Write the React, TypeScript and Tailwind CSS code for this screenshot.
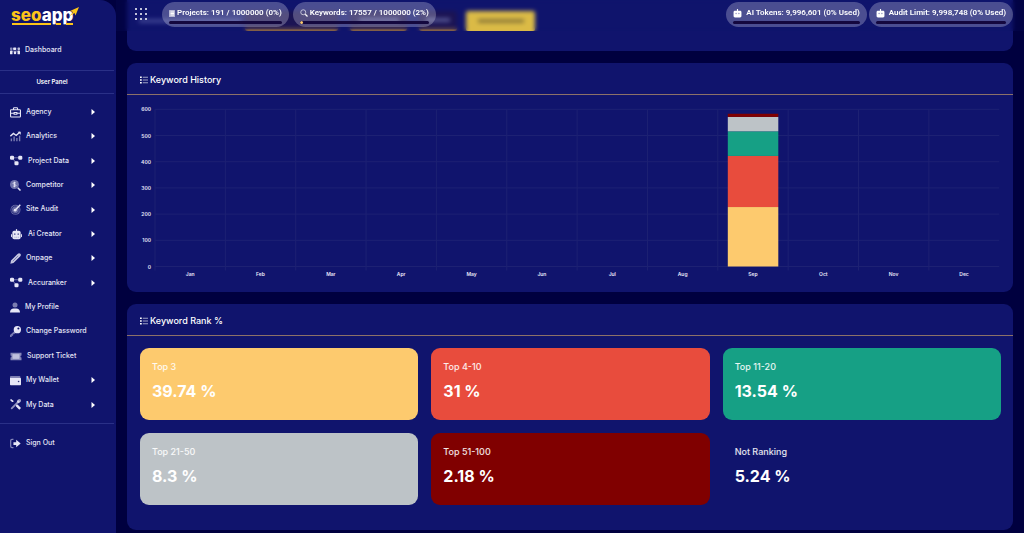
import type { ReactNode } from 'react';

interface IconProps {
  className?: string;
  children: ReactNode;
}

function Icon({ className = 'w-[11px]', children }: IconProps) {
  return (
    <svg className={`h-[11px] shrink-0 ${className}`} viewBox="0 0 16 16" fill="currentColor" aria-hidden="true">
      {children}
    </svg>
  );
}

const nodesIcon = (
  <svg className="h-[11px] w-[13px] shrink-0" viewBox="0 0 19 16" fill="currentColor" aria-hidden="true">
    <path d="M3 4h13M4 5l5 7" stroke="currentColor" strokeWidth="1.2" opacity=".55" />
    <rect x="0" y="1" width="6" height="6" rx="2" />
    <rect x="12" y="1" width="6" height="6" rx="2" />
    <rect x="6.5" y="9" width="6" height="6" rx="2" />
  </svg>
);

const dashboardIcon = (
  <Icon className="w-[10px]">
    <rect x="0" y="3" width="4" height="4" rx="1" opacity=".55" />
    <rect x="5" y="3" width="5" height="4" rx="1" />
    <rect x="12" y="3" width="4" height="4" rx="1" opacity=".8" />
    <rect x="0" y="8" width="4" height="6" rx="1" />
    <rect x="6" y="9" width="4" height="5" rx="2" />
    <rect x="12" y="8" width="4" height="6" rx="1" />
    <rect x="4" y="8" width="8" height="2" opacity=".4" />
  </Icon>
);

const briefcaseIcon = (
  <Icon>
    <path
      d="M5 4V2.2C5 1.5 5.5 1 6.200 1h3.600C10.500 1 11 1.500 11 2.200V4M1.800 4h12.400c.6 0 1 .4 1 1v8.600c0 .6-.4 1-1 1H1.800c-.6 0-1-.4-1-1V5c0-.6.4-1 1-1zM1 9h5m4 0h5M6 8v2.500h4V8z"
      fill="none"
      stroke="currentColor"
      strokeWidth="1.600"
    />
  </Icon>
);

const analyticsIcon = (
  <Icon>
    <path d="M0.500 7.500 5 3.500l4 3L14.500 1.500" fill="none" stroke="currentColor" strokeWidth="2" />
    <path d="M11 1h4.500v4.500z" />
    <path d="M1 11h2v4H1zM5 8h2v7H5zM9 10h2v5H9zM13 7h2v8h-2z" opacity=".5" />
  </Icon>
);

const competitorIcon = (
  <Icon>
    <circle cx="6.500" cy="6.500" r="6.500" opacity=".45" />
    <path d="m10.500 12 1.500-1.500 4 4-1.500 1.500z" />
    <path
      d="M8.500 4.500c-.5-.6-1.200-.8-2-.8-1.100 0-1.900.5-1.900 1.300 0 2 4 .8 4 2.900 0 .9-.9 1.400-2 1.400-.9 0-1.600-.3-2.100-.9M6.500 2.500v8"
      fill="none"
      stroke="currentColor"
      strokeWidth="1.300"
    />
  </Icon>
);

const auditIcon = (
  <Icon>
    <circle cx="8" cy="8.500" r="7.300" opacity=".4" />
    <path d="M12.500 5.500A5.600 5.600 0 1 1 9.500 3.200" fill="none" stroke="#10146d" strokeWidth="1" />
    <path d="M7 9.500 15 1" stroke="currentColor" strokeWidth="2" />
    <circle cx="7.500" cy="9" r="2" />
  </Icon>
);

const robotIcon = (
  <Icon>
    <rect x="7.200" y="0" width="1.600" height="4" rx=".8" />
    <rect x="2" y="2.500" width="12" height="12.500" rx="2.500" />
    <rect x="0" y="7" width="1.400" height="5" rx=".7" />
    <rect x="14.600" y="7" width="1.400" height="5" rx=".7" />
    <circle cx="5.500" cy="7.500" r="1.200" fill="#5a5e9c" />
    <circle cx="10.500" cy="7.500" r="1.200" fill="#5a5e9c" />
    <path d="M5 12h1.500m1 0h1.500m1 0h1.500" stroke="#8a8dbb" />
  </Icon>
);

const pencilIcon = (
  <Icon>
    <path d="M.5 15.500 1.500 11 11 1.500C12.500 0 14 .2 15 1.200s1.200 2.300-.3 3.800L5 14.500z" opacity=".85" />
    <path d="m4 12 8-8" stroke="#5a5e9c" />
  </Icon>
);

const userIcon = (
  <Icon className="w-[10px]">
    <circle cx="8" cy="4" r="4" opacity=".5" />
    <path d="M0 16c0-4 2.500-6.500 6-6.500h4c3.500 0 6 2.500 6 6.500z" />
  </Icon>
);

const keyIcon = (
  <Icon>
    <path d="m7 7 2 2-3 3H4.500v2H2.500v2H0v-3z" opacity=".5" />
    <path d="M10.700 0a5.300 5.300 0 1 1 0 10.600 5.300 5.300 0 0 1 0-10.600zm1.500 2.200a1.500 1.500 0 1 0 0 3 1.500 1.500 0 0 0 0-3z" />
  </Icon>
);

const ticketIcon = (
  <Icon className="w-[12px]">
    <path d="M0 2.500h16v4a1.500 1.500 0 0 0 0 3v4H0v-4a1.500 1.500 0 0 0 0-3z" opacity=".55" />
    <rect x="3.500" y="5" width="9" height="6" opacity=".6" stroke="currentColor" />
  </Icon>
);

const walletIcon = (
  <Icon>
    <path d="M1.500 1.500h12.500c.6 0 1 .4 1 1V4H0V3c0-.8.700-1.500 1.500-1.500z" opacity=".5" />
    <path d="M0 4h14.500c.8 0 1.500.7 1.500 1.500v8c0 .8-.7 1.500-1.500 1.500h-13C.7 15 0 14.300 0 13.500z" />
    <circle cx="12.500" cy="9.500" r="1.200" fill="#34387f" />
  </Icon>
);

const toolsIcon = (
  <Icon>
    <path d="m14.500 1.500-12 12" stroke="currentColor" strokeWidth="2.600" strokeLinecap="round" opacity=".6" />
    <path d="M10 4.500c0-2.500 2-4.500 4.500-4l-2 2 1 1 2-2c.8 2.500-1 4.700-3.500 4.500z" opacity=".8" />
    <path d="M0 1.500 1.500 0 5 2.500v2l4 4 2-.5 5 5-2.500 2.500-5-5 .5-2-4-4H3z" />
  </Icon>
);

const signOutIcon = (
  <Icon>
    <path d="M5 2H3C1.800 2 1 2.800 1 4v8c0 1.200.8 2 2 2h2" fill="none" stroke="currentColor" strokeWidth="1.800" opacity=".55" />
    <path d="M5 6h4V2.500l6.500 5.500L9 13.500V10H5z" />
  </Icon>
);

const listIcon = (
  <svg className="h-2 w-2 shrink-0" viewBox="0 0 16 16" fill="currentColor" aria-hidden="true">
    <path d="M0 1h3.500v3H0zM0 6.500h3.500v3H0zM0 12h3.500v3H0z" />
    <path d="M5.500 1.500H16v2H5.500zM5.500 7H16v2H5.500zM5.500 12.500H16v2H5.500z" opacity=".6" />
  </svg>
);

const menuItems = [
  { label: 'Agency', icon: briefcaseIcon, expandable: true },
  { label: 'Analytics', icon: analyticsIcon, expandable: true },
  { label: 'Project Data', icon: nodesIcon, expandable: true },
  { label: 'Competitor', icon: competitorIcon, expandable: true },
  { label: 'Site Audit', icon: auditIcon, expandable: true },
  { label: 'Ai Creator', icon: <span className="flex pl-px pr-px">{robotIcon}</span>, expandable: true },
  { label: 'Onpage', icon: pencilIcon, expandable: true },
  { label: 'Accuranker', icon: nodesIcon, expandable: true },
  { label: 'My Profile', icon: userIcon, expandable: false },
  { label: 'Change Password', icon: keyIcon, expandable: false },
  { label: 'Support Ticket', icon: ticketIcon, expandable: false },
  { label: 'My Wallet', icon: walletIcon, expandable: true },
  { label: 'My Data', icon: toolsIcon, expandable: true },
];

const months = ['Jan', 'Feb', 'Mar', 'Apr', 'May', 'Jun', 'Jul', 'Aug', 'Sep', 'Oct', 'Nov', 'Dec'];

const segments = [
  { from: 0, to: 227, color: '#fdca6e' },
  { from: 227, to: 422, color: '#e84c3d' },
  { from: 422, to: 516, color: '#16a085' },
  { from: 516, to: 571, color: '#bdc3c7' },
  { from: 571, to: 583, color: '#800000' },
];

const ranks = [
  { label: 'Top 3', value: '39.74 %', color: 'bg-[#fdca6e]' },
  { label: 'Top 4-10', value: '31 %', color: 'bg-[#e84c3d]' },
  { label: 'Top 11-20', value: '13.54 %', color: 'bg-[#16a085]' },
  { label: 'Top 21-50', value: '8.3 %', color: 'bg-[#bdc3c7]' },
  { label: 'Top 51-100', value: '2.18 %', color: 'bg-[#800000]' },
  { label: 'Not Ranking', value: '5.24 %', color: '' },
];

function Logo() {
  return (
    <svg className="h-7 w-[72px]" viewBox="0 0 72 28" role="img" aria-label="seoapp">
      <text x="1" y="19" fontSize="17" fontWeight="800" fontFamily="Inter, sans-serif" fill="#fff">
        <tspan fill="#fcc419">seo</tspan>app
      </text>
      <path d="M2 22h39M46 22h5M56 22h7" stroke="#fcc419" strokeWidth="2" />
      <path d="M69 5 60 9l3 1-4 4.500 5.500-3.500 1 2.500z" fill="#fcc419" />
    </svg>
  );
}

interface MenuLinkProps {
  label: string;
  icon: ReactNode;
  expandable?: boolean;
}

function MenuLink({ label, icon, expandable = false }: MenuLinkProps) {
  return (
    <a href="#" className="flex h-6 items-center gap-[5px] pr-5 pl-[10px] text-[7px] font-medium whitespace-nowrap">
      {icon}
      <span className="flex-1">{label}</span>
      {expandable && (
        <svg className="h-[6px] w-[5px] shrink-0 fill-white" viewBox="0 0 5 6" aria-hidden="true">
          <path d="M0.500 0 4 3 .5 6z" />
        </svg>
      )}
    </a>
  );
}

function Sidebar() {
  return (
    <aside className="flex w-[116px] shrink-0 flex-col rounded-tr-[16px] bg-[#10146d] text-[#e6e6f6]">
      <div className="pt-[2px] pl-[10px]">
        <Logo />
      </div>
      <nav>
        <div className="py-2">
          <MenuLink label="Dashboard" icon={dashboardIcon} />
        </div>
        <p className="mr-[2px] flex h-6 items-center justify-center border-y border-[#2a3087] pr-[10px] pb-px text-[6px] font-semibold text-white">
          User Panel
        </p>
        <div className="mt-[6px] flex h-[317px] flex-col justify-between">
          {menuItems.map((item) => (
            <MenuLink key={item.label} label={item.label} icon={item.icon} expandable={item.expandable} />
          ))}
        </div>
        <div className="mt-[6px] mr-[2px] border-t border-[#2a3087] pt-[7px]">
          <MenuLink label="Sign Out" icon={signOutIcon} />
        </div>
      </nav>
    </aside>
  );
}

interface UsagePillProps {
  icon: ReactNode;
  text: string;
  used?: boolean;
}

function UsagePill({ icon, text, used = false }: UsagePillProps) {
  return (
    <div className="h-[25px] rounded-full bg-white/25 px-[7px] pt-[5px]">
      <div className="flex h-3 items-center gap-[2px] font-[Roboto,sans-serif] text-[8px] font-semibold whitespace-nowrap text-white">
        {icon}
        {text}
      </div>
      <div className="mt-[2px] h-[3px] overflow-hidden rounded-full bg-[#14083f]">
        {used && <div className="h-full w-[3px] rounded-full bg-[#fdca6e]" />}
      </div>
    </div>
  );
}

const pillRobot = (
  <svg className="mr-[2px] h-[9px] w-[9px] shrink-0" viewBox="0 0 16 16" fill="currentColor" aria-hidden="true">
    <path d="M7 0h2v3h3.500C14 3 15 4 15 5.500v7c0 1.500-1 2.500-2.500 2.500h-9C2 15 1 14 1 12.500v-7C1 4 2 3 3.500 3H7z" />
    <circle cx="5.500" cy="8" r="1.200" fill="#8a8dbb" />
    <circle cx="10.500" cy="8" r="1.200" fill="#8a8dbb" />
  </svg>
);

function Topbar() {
  return (
    <header className="sticky top-0 z-10 -mb-[31px] flex h-[31px] items-start gap-1 bg-[#10146d]/15 pt-[2px] pr-[11px] pl-[19px] backdrop-blur-[2px]">
      <button type="button" aria-label="Apps" className="mt-[6px] mr-[11px] text-white">
        <svg className="h-3 w-3" viewBox="0 0 12 12" fill="currentColor" aria-hidden="true">
          <circle cx="1" cy="1" r="1" />
          <circle cx="6" cy="1" r="1" />
          <circle cx="11" cy="1" r="1" />
          <circle cx="1" cy="6" r="1" />
          <circle cx="6" cy="6" r="1" />
          <circle cx="11" cy="6" r="1" />
          <circle cx="1" cy="11" r="1" />
          <circle cx="6" cy="11" r="1" />
          <circle cx="11" cy="11" r="1" />
        </svg>
      </button>
      <UsagePill
        icon={
          <svg className="h-[7px] w-[6px] shrink-0" viewBox="0 0 12 14" fill="currentColor" aria-hidden="true">
            <rect width="12" height="14" rx="1" opacity=".6" />
            <path d="M3 3h7v2H3zM3 6h7v2H3zM3 9h7v2H3z" />
          </svg>
        }
        text="Projects: 191 / 1000000 (0%)"
      />
      <UsagePill
        used
        icon={
          <svg className="h-2 w-2 shrink-0" viewBox="0 0 16 16" fill="none" stroke="currentColor" aria-hidden="true">
            <circle cx="6.500" cy="6.500" r="5" strokeWidth="1.800" opacity=".7" />
            <path d="m10.500 10.500 4.500 4.500" strokeWidth="2.500" />
          </svg>
        }
        text="Keywords: 17557 / 1000000 (2%)"
      />
      <div className="ml-auto flex gap-[2px]">
        <UsagePill icon={pillRobot} text="AI Tokens: 9,996,601 (0% Used)" />
        <UsagePill icon={pillRobot} text="Audit Limit: 9,998,748 (0% Used)" />
      </div>
    </header>
  );
}

// Scrolled under the topbar, so only its blurred lower part shows
function FilterCard() {
  const filters = [
    { label: 'Date range', width: 'w-[93px]', bar: 'w-0' },
    { label: 'Project', width: 'ml-3 w-[57px]', bar: 'w-10' },
    { label: 'Ranking', width: 'ml-3 w-[38px]', bar: 'w-6' },
  ];
  return (
    <section className="h-[51px] rounded-b-[9px] bg-[#10146d] pt-[11px] pl-3">
      <div className="flex h-5 items-center">
        <span className="mr-1 h-1 w-[102px] bg-[#454a98]" />
        {filters.map((filter) => (
          <button
            key={filter.label}
            type="button"
            aria-label={filter.label}
            className={`flex h-5 items-center justify-center rounded-[3px] border-b-2 border-[#c08a3a] bg-[#1e1450] ${filter.width}`}
          >
            <span className={`h-1 bg-[#5f5f98] ${filter.bar}`} />
          </button>
        ))}
        <button type="button" aria-label="Add keywords" className="ml-[9px] flex h-5 w-[69px] items-center justify-center rounded-[2px] bg-[#ffd840]">
          <span className="h-1 w-[46px] bg-[#a89030]" />
        </button>
      </div>
    </section>
  );
}

function Panel({ title, children }: { title: string; children: ReactNode }) {
  return (
    <section className="overflow-hidden rounded-[9px] bg-[#10146d]">
      <h2 className="flex h-8 items-center gap-[2px] border-b border-[#8c7168] pt-[2px] pl-[13px] text-[9px] font-medium text-white">
        {listIcon}
        {title}
      </h2>
      {children}
    </section>
  );
}

function KeywordChart() {
  const left = 15;
  const step = 70.35;
  const base = 163.5;
  const unit = 0.262;
  return (
    <svg className="block w-full" viewBox="0 0 861 180" fontFamily="Inter, sans-serif" fontSize="5" fontWeight="600" role="img" aria-label="Keyword history by month">
      {[0, 100, 200, 300, 400, 500, 600].map((tick) => (
        <g key={tick}>
          <path d={`M${left} ${base - tick * unit}h${step * 12}`} stroke="#1d2173" />
          <text x="11" y={base - tick * unit + 2} textAnchor="end" fill="#e8e8f8">
            {tick}
          </text>
        </g>
      ))}
      {months.map((month, i) => (
        <g key={month}>
          <path d={`M${left + i * step} ${base - 600 * unit}V${base + 4}`} stroke="#1d2173" />
          <text x={left + (i + 0.5) * step} y={base + 9} textAnchor="middle" fill="#e8e8f8">
            {month}
          </text>
        </g>
      ))}
      {segments.map((s) => (
        <rect key={s.color} x={left + 8 * step + 10} y={base - s.to * unit} width="50.500" height={(s.to - s.from) * unit} fill={s.color} />
      ))}
    </svg>
  );
}

export default function App() {
  return (
    <div className="flex min-h-screen bg-[#00003f] font-[Inter,sans-serif] text-white">
      <Sidebar />
      <div className="min-w-0 flex-1">
        <Topbar />
        <main className="flex flex-col gap-3 pr-[11px] pb-[3px] pl-[11px]">
          <FilterCard />
          <Panel title="Keyword History">
            <div className="pt-2 pr-3 pb-[9px] pl-[13px]">
              <KeywordChart />
            </div>
          </Panel>
          <Panel title="Keyword Rank %">
            <div className="grid grid-cols-3 gap-[13px] pt-3 pr-3 pb-[25px] pl-[13px]">
              {ranks.map((rank) => (
                <div key={rank.label} className={`h-[72px] rounded-[9px] px-3 pt-[13px] ${rank.color}`}>
                  <p className="text-[9px] leading-3 font-medium text-white/90">{rank.label}</p>
                  <p className="mt-[6px] text-[16px] leading-6 font-bold">{rank.value}</p>
                </div>
              ))}
            </div>
          </Panel>
        </main>
      </div>
    </div>
  );
}
